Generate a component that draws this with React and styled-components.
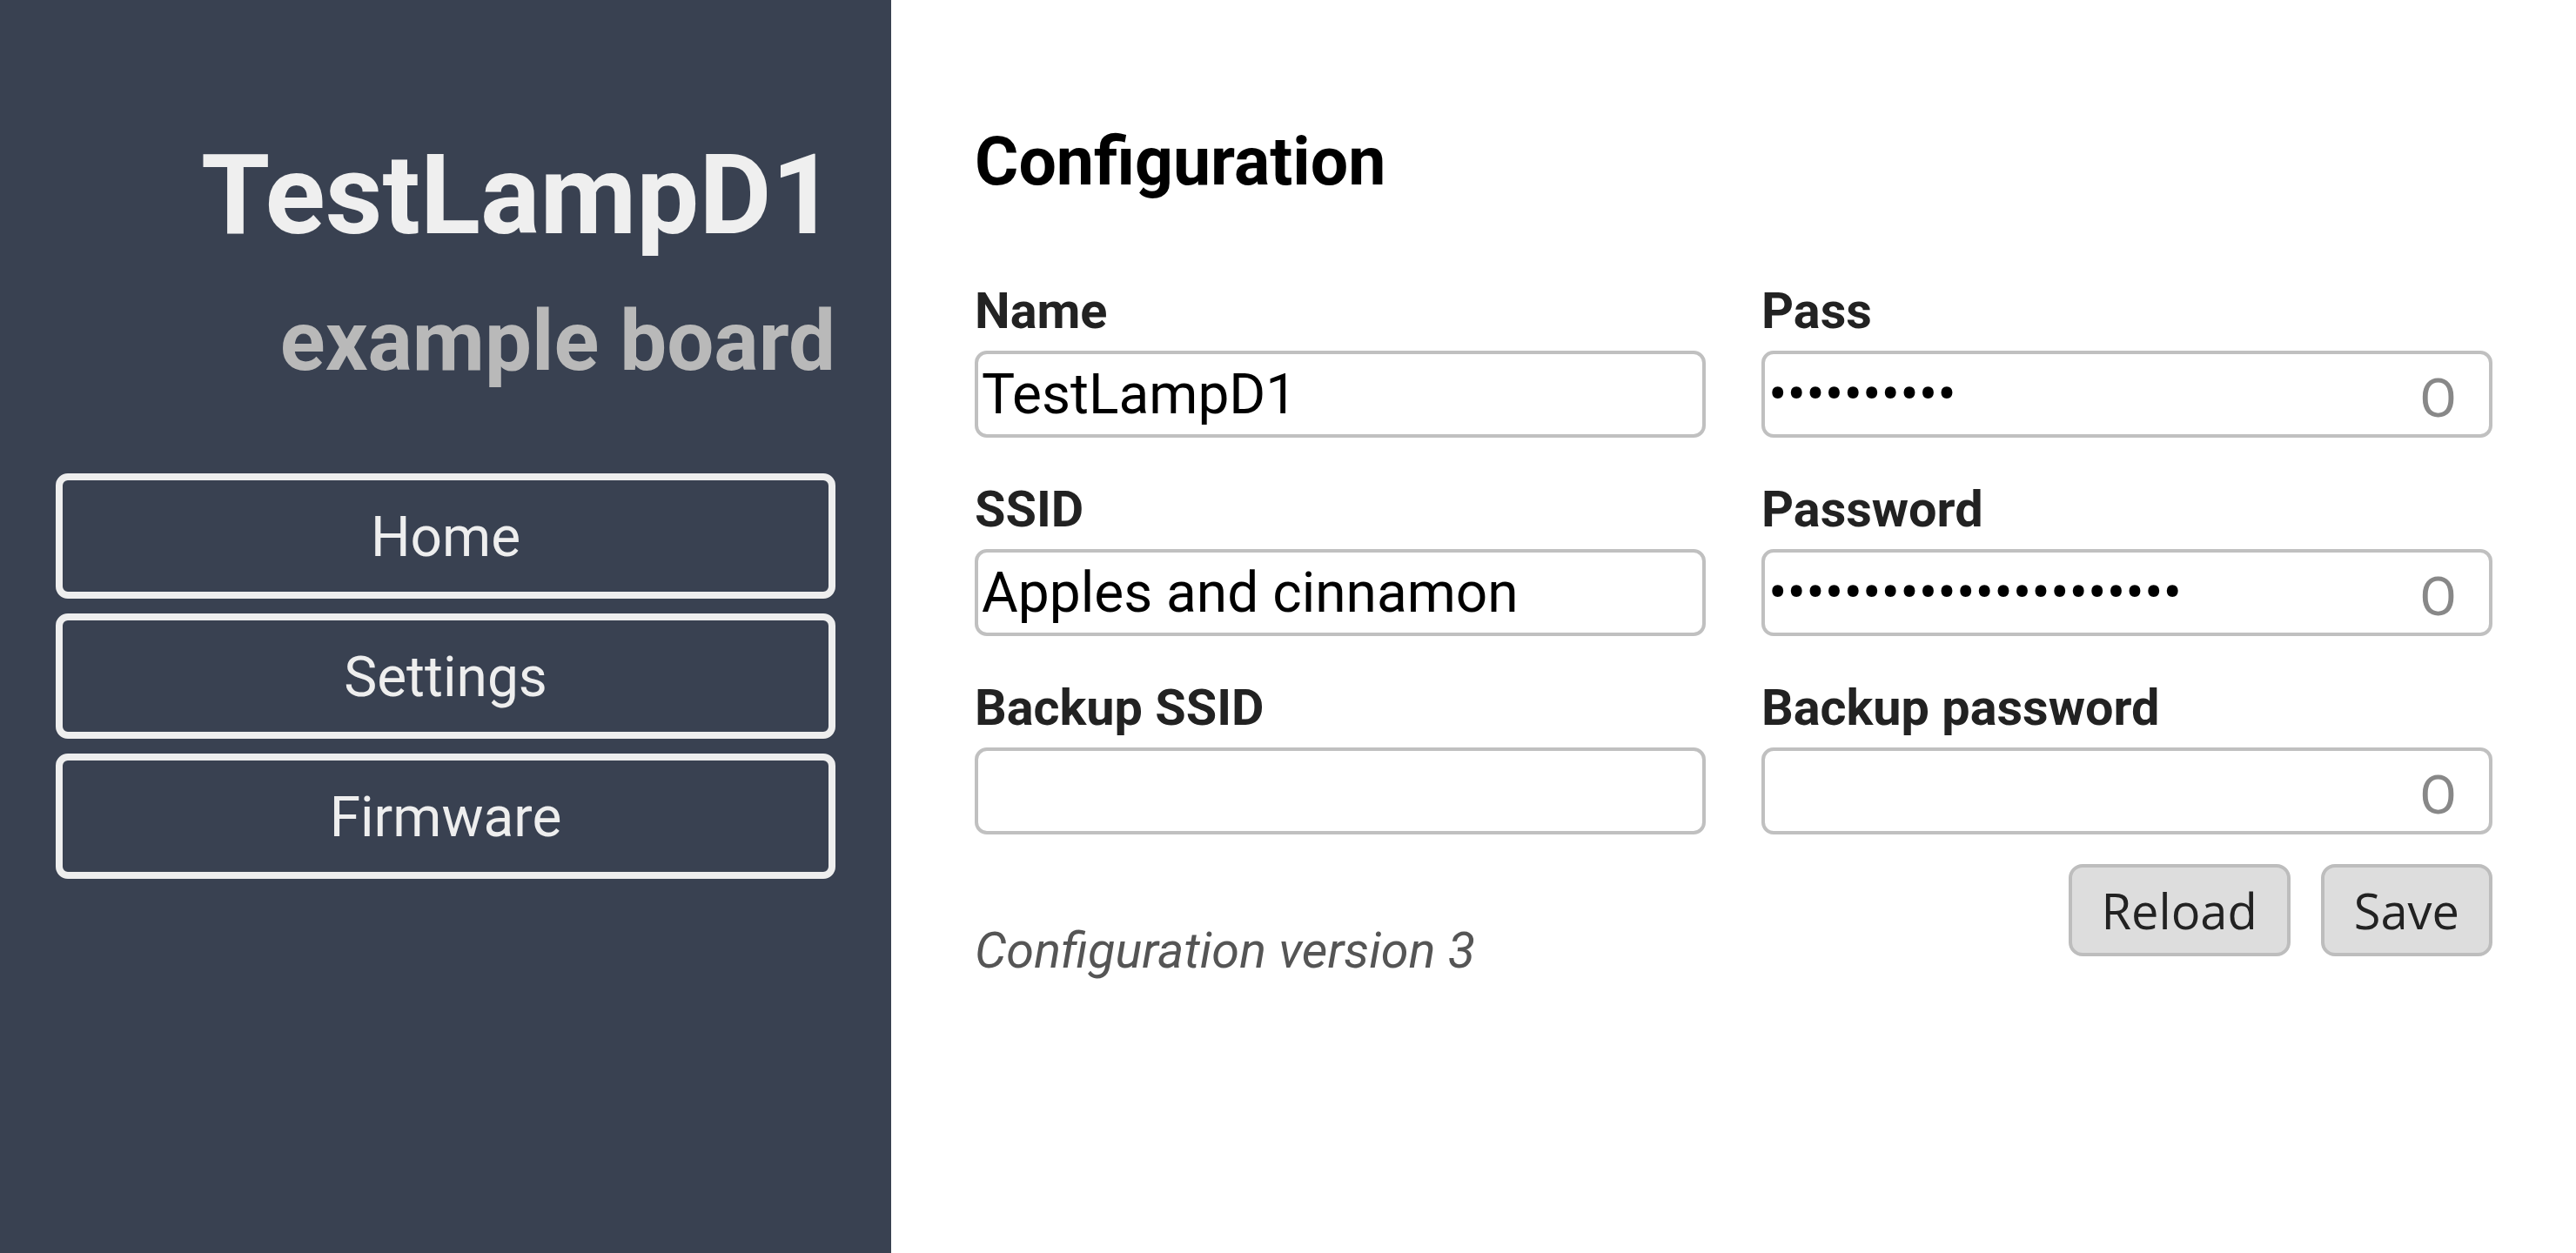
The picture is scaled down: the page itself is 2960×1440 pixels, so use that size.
import styled, { createGlobalStyle } from "styled-components";

const GlobalStyle = createGlobalStyle`
  html, body {
    margin: 0;
    padding: 0;
    background: #fff;
  }
  body {
    font-family: Roboto, "Liberation Sans", sans-serif;
  }
  * {
    box-sizing: border-box;
  }
`;

const nav = ["Home", "Settings", "Firmware"];

const fields = [
  { label: "Name", value: "TestLampD1" },
  { label: "Pass", value: "abcdefghij", secret: true },
  { label: "SSID", value: "Apples and cinnamon" },
  { label: "Password", value: "abcdefghijklmnopqrstuv", secret: true },
  { label: "Backup SSID", value: "" },
  { label: "Backup password", value: "", secret: true },
];

const App = () => {
  return (
    <Page>
      <GlobalStyle />
      <Sidebar>
        <Title>TestLampD1</Title>
        <Subtitle>example board</Subtitle>
        <Nav>
          {nav.map((item) => (
            <NavButton key={item}>{item}</NavButton>
          ))}
        </Nav>
      </Sidebar>

      <Main>
        <Heading>Configuration</Heading>
        <Form>
          {fields.map((f) => (
            <Field key={f.label}>
              <Label>{f.label}</Label>
              <InputWrap>
                <Input
                  type={f.secret ? "password" : "text"}
                  defaultValue={f.value}
                />
                {f.secret && <Reveal>O</Reveal>}
              </InputWrap>
            </Field>
          ))}
        </Form>
        <Footer>
          <Version>Configuration version 3</Version>
          <Actions>
            <Button>Reload</Button>
            <Button>Save</Button>
          </Actions>
        </Footer>
      </Main>
    </Page>
  );
};

export default App;

const Page = styled.div`
  display: flex;
  min-height: 1440px;
  width: 2960px;
`;

const Sidebar = styled.aside`
  width: 1024px;
  flex-shrink: 0;
  background-color: #394151;
  padding: 149px 64px 64px;
  display: flex;
  flex-direction: column;
  align-items: stretch;
`;

const Title = styled.h1`
  margin: 0;
  text-align: right;
  font-size: 128px;
  font-weight: 700;
  line-height: 150px;
  color: #efefef;
`;

const Subtitle = styled.h2`
  margin: 37px 0 0;
  text-align: right;
  font-size: 96px;
  font-weight: 700;
  line-height: 112px;
  color: #b9b9b9;
`;

const Nav = styled.nav`
  margin-top: 96px;
  display: flex;
  flex-direction: column;
  gap: 17px;
`;

const NavButton = styled.div`
  height: 144px;
  border: 8px solid #eeeeee;
  border-radius: 14px;
  display: flex;
  align-items: center;
  justify-content: center;
  padding-top: 2px;
  font-size: 64px;
  color: #eeeeee;
  cursor: pointer;
`;

const Main = styled.main`
  flex: 1;
  padding: 140px 96px 96px;
`;

const Heading = styled.h2`
  margin: 0;
  font-size: 77px;
  font-weight: 700;
  line-height: 92px;
  color: #000;
`;

const Form = styled.div`
  margin-top: 93px;
  display: grid;
  grid-template-columns: 1fr 1fr;
  column-gap: 64px;
  row-gap: 50px;
`;

const Field = styled.div`
  display: flex;
  flex-direction: column;
`;

const Label = styled.label`
  font-size: 57.6px;
  font-weight: 700;
  line-height: 66px;
  color: #222;
  margin-bottom: 12px;
`;

const InputWrap = styled.div`
  position: relative;
`;

const Input = styled.input`
  width: 100%;
  height: 100px;
  border: 4px solid #c0c0c0;
  border-radius: 14px;
  padding: 0 4px;
  font-family: Roboto, "Liberation Sans", sans-serif;
  font-size: 64px;
  color: #000;
  background: #fff;
  outline: none;
`;

const Reveal = styled.span`
  position: absolute;
  right: 41px;
  top: 50%;
  transform: translateY(-50%);
  margin-top: 5px;
  font-family: Roboto, "DejaVu Sans", sans-serif;
  font-size: 62px;
  font-weight: 400;
  line-height: 1;
  color: #888;
  cursor: pointer;
`;

const Footer = styled.div`
  margin-top: 34px;
  display: flex;
  justify-content: space-between;
  align-items: flex-start;
`;

const Version = styled.p`
  margin: 67px 0 0;
  font-size: 57.6px;
  font-style: italic;
  line-height: 66px;
  color: #555;
`;

const Actions = styled.div`
  display: flex;
  gap: 35px;
`;

const Button = styled.button`
  height: 106px;
  padding: 0 34px;
  border: 4px solid #bdbdbd;
  border-radius: 16px;
  background-color: #dddddd;
  font-family: "Open Sans", "Noto Sans", sans-serif;
  font-size: 56px;
  color: #222;
  cursor: pointer;
`;
